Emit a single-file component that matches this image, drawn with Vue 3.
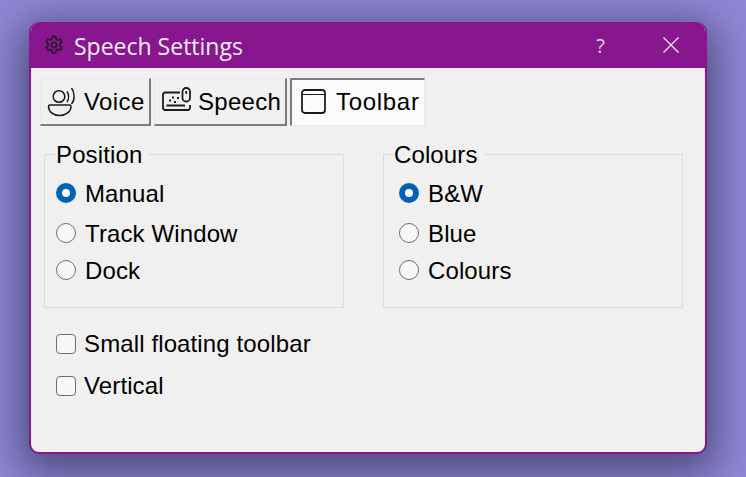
<script setup>
const positions = [
  { label: 'Manual', checked: true, cls: 'r1' },
  { label: 'Track Window', checked: false, cls: 'r2' },
  { label: 'Dock', checked: false, cls: 'r3' },
]
const colours = [
  { label: 'B&W', checked: true, cls: 'r1' },
  { label: 'Blue', checked: false, cls: 'r2' },
  { label: 'Colours', checked: false, cls: 'r3' },
]
</script>

<template>
  <div class="stage">
    <div class="window">
      <header class="titlebar">
        <svg class="gear" width="20" height="20" viewBox="0 0 20 20" fill="none" stroke="#2c1a33" stroke-width="1.8" stroke-linejoin="round">
          <path d="M8.3 1.500h3.400l.5 2.700 1.500.8 2.500-1 1.700 3-2 1.800v1.800l2 1.800-1.700 3-2.500-1-1.500.8-.5 2.700H8.300l-.5-2.700-1.500-.8-2.500 1-1.700-3 2-1.800V8.800l-2-1.800 1.700-3 2.500 1 1.500-.8z" />
          <circle cx="10" cy="10" r="2.600" />
        </svg>
        <span class="title">Speech Settings</span>
        <span class="help">?</span>
        <svg class="close" width="16" height="16" viewBox="0 0 16 16" stroke="#f4e8f6" stroke-width="1.3" fill="none">
          <path d="M.5.5l15 15M15.500.5l-15 15" />
        </svg>
      </header>

      <div class="body">
        <div class="tabs">
          <button class="tab voice">
            <svg class="icon" width="30" height="30" viewBox="0 0 30 30" fill="none" stroke="#1c1c1c" stroke-width="1.5">
              <circle cx="12" cy="9.500" r="5.800" />
              <path d="M20 4.500c2 3 2 7.500 0 10.500M24.500 1c3.500 4.500 3.500 12 0 16" />
              <path d="M3 18h19.500c1 0 1.500.500 1.500 1.500 0 5-5 9-11.500 9S1.500 24.500 1.500 19.500C1.500 18.500 2 18 3 18z" />
            </svg>
            <span>Voice</span>
          </button>
          <button class="tab speech">
            <svg class="icon" width="30" height="30" viewBox="0 0 30 30" fill="none" stroke="#1c1c1c" stroke-width="1.800" stroke-linejoin="round">
              <path d="M18 5.500H2.500L1 7v14.500L2.500 23h24l1.500-1.500V18" />
              <path d="M4.500 18.500H23" />
              <path d="M7 13.500h2M10 10.500h2M12 15h2M15 11h2" stroke-width="2" />
              <rect x="20.500" y="1" width="7.500" height="13.500" rx="3.500" />
              <path d="M24.200 4v3" />
            </svg>
            <span>Speech</span>
          </button>
          <button class="tab toolbar">
            <svg class="icon" width="26" height="26" viewBox="0 0 26 26" fill="none" stroke="#1c1c1c" stroke-width="1.800">
              <rect x="1" y="1" width="23" height="23" rx="3" />
              <path d="M1 5.500h23" stroke-width="1.200" />
            </svg>
            <span>Toolbar</span>
          </button>
        </div>

        <div class="groups">
          <fieldset class="group">
            <legend>Position</legend>
            <div v-for="item in positions" :key="item.label" class="option" :class="item.cls">
              <span class="radio" :class="{ on: item.checked }"></span>
              <span class="label">{{ item.label }}</span>
            </div>
          </fieldset>
          <fieldset class="group second">
            <legend>Colours</legend>
            <div v-for="item in colours" :key="item.label" class="option" :class="item.cls">
              <span class="radio" :class="{ on: item.checked }"></span>
              <span class="label">{{ item.label }}</span>
            </div>
          </fieldset>
        </div>

        <div class="checks">
          <div class="check-row">
            <span class="box"></span>
            <span class="label">Small floating toolbar</span>
          </div>
          <div class="check-row">
            <span class="box"></span>
            <span class="label">Vertical</span>
          </div>
        </div>
      </div>
    </div>
  </div>
</template>

<style>
html, body { margin: 0; background: #8f88d6; }
</style>

<style scoped>
.stage {
  width: 746px;
  height: 477px;
  box-sizing: border-box;
  padding: 22px 39px 23px 29px;
  background: #8f88d6;
  overflow: hidden;
  font-family: "Liberation Sans", Arial, sans-serif;
}
.window {
  width: 678px;
  height: 432px;
  box-sizing: border-box;
  border: 2px solid #88178f;
  border-top: 0;
  border-radius: 10px;
  background: #f0f0f0;
  box-shadow: 0 10px 40px 8px rgba(30, 30, 60, 0.6);
  overflow: hidden;
}
.titlebar {
  height: 46px;
  margin: 0 -2px;
  padding: 0 28px 0 15px;
  display: flex;
  align-items: center;
  background: #88178f;
  color: #f7eef8;
}
.gear { flex: none; }
.title {
  margin-left: 10px;
  padding-top: 2px;
  font-family: "Open Sans", sans-serif;
  font-size: 23px;
  flex: 1;
}
.help {
  font-family: "Open Sans", sans-serif;
  font-size: 20px;
  margin-right: 58px;
  color: #e6d5e8;
}
.body { padding: 10px 0 0 9px; }
.tabs { display: flex; gap: 3px; }
.tab {
  height: 48px;
  box-sizing: border-box;
  display: flex;
  align-items: center;
  padding: 0;
  background: #f0f0f0;
  border: 1px solid;
  border-color: #e9e9e9 #7c7c7c #7c7c7c #e9e9e9;
  border-width: 1px 2px 2px 1px;
  font: 24px "Liberation Sans", Arial, sans-serif;
  letter-spacing: 0.3px;
  color: #000;
}
.icon { flex: none; }
.voice { width: 111px; padding-left: 6px; gap: 7px; letter-spacing: 0.4px; }
.speech { width: 133px; padding-left: 7px; gap: 6px; }
.toolbar {
  width: 135px;
  padding-left: 9px;
  padding-bottom: 2px;
  gap: 9px;
  border-color: #7c7c7c #e9e9e9 #e9e9e9 #7c7c7c;
  border-width: 2px 1px 1px 2px;
  background: #fbfbfb;
  letter-spacing: 0.7px;
}
.groups {
  display: flex;
  gap: 39px;
  margin: 15px 0 0 4px;
}
.group {
  width: 300px;
  height: 167px;
  box-sizing: border-box;
  margin: 0;
  padding: 0 0 0 11px;
  border: 1px solid #dcdcdc;
  min-inline-size: 0;
}
.second { padding-left: 15px; }
.second legend { margin-left: -5px; }
legend {
  margin-left: 0;
  font-size: 24px;
  line-height: 24px;
  letter-spacing: 0.12px;
  color: #000;
  padding: 2px 6px 0 0;
}
.option {
  display: flex;
  align-items: center;
  height: 24px;
}
.option .label { padding-top: 2px; }
.r1 { margin-top: 14px; }
.r2 { margin-top: 16px; }
.r3 { margin-top: 13px; }
.radio {
  width: 20px;
  height: 20px;
  box-sizing: border-box;
  border: 1px solid #6e6e6e;
  border-radius: 50%;
  background: #f7f7f7;
  flex: none;
}
.radio.on {
  border: 6.5px solid #0063b8;
  background: #fff;
}
.label {
  margin-left: 9px;
  font-size: 24px;
  line-height: 24px;
  letter-spacing: 0.12px;
  color: #000;
}
.checks { margin: 24px 0 0 16px; }
.check-row {
  display: flex;
  align-items: center;
  height: 24px;
  margin-bottom: 18px;
}
.check-row .label { margin-left: 8px; }
.box {
  width: 20px;
  height: 20px;
  box-sizing: border-box;
  border: 1px solid #6e6e6e;
  border-radius: 4px;
  background: #f7f7f7;
  flex: none;
}
</style>
